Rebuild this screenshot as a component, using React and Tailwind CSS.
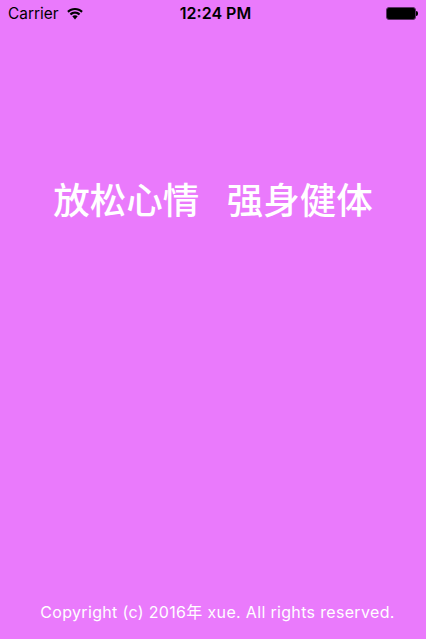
import React from "react";

const sans = "font-['Inter','Liberation_Sans','Noto_Sans_CJK_SC',sans-serif]";

const WifiIcon = () => (
  <svg width="16" height="12" viewBox="0 0 16 12" fill="#000" className="ml-[9px] mt-[1px]">
    <path d="M8 0C5 0 2.3 1.2 0.2 3.1L1.7 4.7C3.4 3.1 5.6 2.1 8 2.1s4.6 1 6.3 2.6l1.5-1.6C13.7 1.2 11 0 8 0z" />
    <path d="M8 3.6C6 3.6 4.1 4.4 2.7 5.7L4.2 7.3C5.2 6.3 6.5 5.7 8 5.7s2.8 0.6 3.8 1.6l1.5-1.6C11.9 4.4 10 3.6 8 3.6z" />
    <path d="M8 7.2C7 7.2 6 7.6 5.3 8.3L8 11.4l2.7-3.1C10 7.6 9 7.2 8 7.2z" />
  </svg>
);

const Battery = () => (
  <div className="flex items-center">
    <div className="w-[30px] h-[13px] rounded-[3px] border border-[#5c2f66] bg-black" />
    <div className="w-[2px] h-[5px] rounded-r-[2px] bg-black" />
  </div>
);

const StatusBar = () => (
  <div className="relative h-[27px] flex items-center justify-between pl-[8px] pr-[8px] text-black">
    <div className="flex items-center">
      <span className="text-[15.4px] leading-[27px]">Carrier</span>
      <WifiIcon />
    </div>
    <span className="absolute left-0 right-0 pl-[5px] text-center text-[16px] font-semibold leading-[27px]">12:24 PM</span>
    <Battery />
  </div>
);

export default function App() {
  return (
    <div className={`h-[639px] w-[426px] flex flex-col bg-[#ea7afc] overflow-hidden ${sans}`}>
      <StatusBar />
      <h1 className="mt-[150px] text-center text-[36.5px] leading-[48px] font-medium text-white whitespace-pre [word-spacing:4px]">
        放松心情  强身健体
      </h1>
      <p className="mt-auto mb-[16px] pl-[9px] text-center text-[16px] leading-[22px] tracking-[0.33px] text-white">
        Copyright (c) 2016年 xue. All rights reserved.
      </p>
    </div>
  );
}
